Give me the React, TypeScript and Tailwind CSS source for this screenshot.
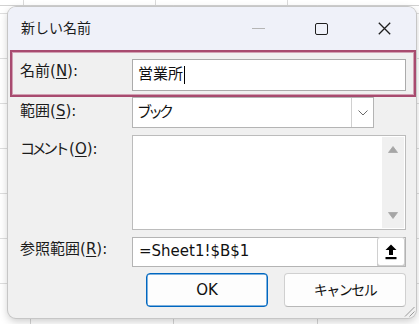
import React from 'react'

function Label({ text, hotkey, pt, wide }: { text: string; hotkey: string; pt: string; wide?: string }) {
  return (
    <div className={`w-[112px] shrink-0 h-[20px] leading-[20px] text-[15px] text-[#1b1b1b] whitespace-nowrap ${pt}`}>
      <span className={wide}>{text}</span>(<span className="underline underline-offset-2">{hotkey}</span>):
    </div>
  )
}

function Triangle({ down }: { down?: boolean }) {
  return (
    <svg width="10" height="7" viewBox="0 0 10 7">
      <path d={down ? 'M0.5 0.5 L9.5 0.5 L5 6.5 Z' : 'M5 0.5 L9.5 6.5 L0.5 6.5 Z'} fill="#a6a6a6" strokeLinejoin="round" stroke="#a6a6a6" strokeWidth="0.8" />
    </svg>
  )
}

export default function App() {
  const hLines = [13, 58, 103, 148, 193, 238, 283]
  return (
    <div className="relative w-[419px] h-[324px] overflow-hidden bg-white font-['DejaVu_Sans','Noto_Sans_CJK_JP',sans-serif]">
      {/* spreadsheet behind the dialog */}
      <div className="absolute left-0 top-[5px] w-full h-[1px] bg-[#d2d2d2]" />
      {[23, 155, 287].map(x => (
        <div key={x} className="absolute top-0 h-[5px] w-[1px] bg-[#dadada]" style={{ left: x }} />
      ))}
      {[30, 173, 317].map(x => (
        <div key={x} className="absolute top-[5px] h-[319px] w-[1px] bg-[#d4d4d4]" style={{ left: x }} />
      ))}
      {hLines.map(y => (
        <div key={y} className="absolute left-0 w-full h-[1px] bg-[#dedede]" style={{ top: y }} />
      ))}

      {/* dialog */}
      <div className="absolute left-[8px] top-[7px] w-[408px] h-[311px] rounded-[8px] bg-[#f0f0f0] shadow-[0_0_0_1px_#c6c6c6,0_3px_8px_rgba(0,0,0,0.22)] flex flex-col">
        {/* title bar */}
        <div className="h-[43px] shrink-0 flex items-center rounded-t-[8px] bg-[#eff1f9]">
          <div className="pl-[13px] text-[14px] text-[#1b1b1b]">新しい名前</div>
          <div className="ml-auto flex h-full">
            <div className="w-[63px] flex items-center justify-center">
              <div className="w-[13px] h-[1px] bg-[#b5b5b5]" />
            </div>
            <div className="w-[63px] flex items-center justify-center">
              <div className="w-[13px] h-[12px] border-[1.5px] border-[#1f1f1f] rounded-[2px]" />
            </div>
            <div className="w-[63px] flex items-center justify-center">
              <svg width="13" height="13" viewBox="0 0 13 13">
                <path d="M0.8 0.8 L12.2 12.2 M12.2 0.8 L0.8 12.2" stroke="#1f1f1f" strokeWidth="1.3" />
              </svg>
            </div>
          </div>
        </div>

        {/* name row (highlighted) */}
        <div className="ml-[2px] w-[406px] h-[47px] shrink-0 border-2 border-[#a84b6f] shadow-[inset_0_0_0_1px_#d2a0b3] flex pl-[8px] pt-[7px]">
          <Label text="名前" hotkey="N" pt="mt-[2px]" />
          <div className="w-[274px] h-[32px] border border-[#ababab] bg-white flex items-center pl-[5px] pb-[1px] text-[15px] text-[#111]">
            <span>営業所</span>
            <span className="inline-block w-[1px] h-[18px] bg-black ml-[1px]" />
          </div>
        </div>

        {/* scope row */}
        <div className="flex pl-[12px] h-[31px] shrink-0">
          <Label text="範囲" hotkey="S" pt="mt-[4px]" />
          <div className="w-[242px] h-[31px] border border-[#b4b4b4] bg-white flex">
            <div className="flex-1 flex items-center pl-[4px] text-[15px] text-[#111]">
              <span className="tracking-[-4px]">ブック</span>
            </div>
            <div className="w-[22px] h-full border-l border-[#d0d0d0] flex items-center justify-center">
              <svg width="10" height="6" viewBox="0 0 10 6">
                <path d="M0.5 0.5 L5 5 L9.5 0.5" fill="none" stroke="#6a6a6a" strokeWidth="1" />
              </svg>
            </div>
          </div>
        </div>

        {/* comment row */}
        <div className="flex pl-[12px] mt-[7px] h-[95px] shrink-0">
          <Label text="コメント" hotkey="O" pt="mt-[4px]" wide="tracking-[-3.5px] mr-[3px]" />
          <div className="w-[274px] h-[95px] border border-[#bcbcbc] bg-white flex justify-end pr-[1px] py-[1px]">
            <div className="w-[22px] h-full bg-[#f0f0f0] flex flex-col items-center justify-between pt-[9px] pb-[9px]">
              <Triangle />
              <Triangle down />
            </div>
          </div>
        </div>

        {/* reference row */}
        <div className="flex pl-[12px] mt-[7px] h-[30px] shrink-0">
          <Label text="参照範囲" hotkey="R" pt="mt-[2px]" />
          <div className="w-[274px] h-[30px] border border-[#b4b4b4] bg-white flex">
            <div className="flex-1 flex items-center pl-[6px] pb-[1px] text-[15px] text-[#111]">=Sheet1!$B$1</div>
            <div className="w-[28px] h-[29px] -mt-[1px] rounded-[3px] border border-[#d0d0d0] bg-white shadow-[0_1px_0_#b8b8b8] flex items-center justify-center">
              <svg width="12" height="16" viewBox="0 0 12 16">
                <path d="M6 0.5 L11.5 6 L8 6 L8 11 L4 11 L4 6 L0.5 6 Z" fill="#000" />
                <rect x="0.5" y="13" width="11" height="2.2" fill="#000" />
              </svg>
            </div>
          </div>
        </div>

        {/* buttons */}
        <div className="flex justify-end gap-[16px] pr-[10px] mt-[6px]">
          <div className="w-[122px] h-[34px] rounded-[4px] border border-[#0067c0] shadow-[inset_0_0_0_0.5px_#0067c0] bg-[#fdfdfd] flex items-center justify-center text-[15px] text-[#111]">
            OK
          </div>
          <div className="w-[122px] h-[34px] rounded-[4px] border border-[#d0d0d0] border-b-[#b8b8b8] bg-[#fdfdfd] flex items-center justify-center text-[14px] text-[#111]">
            <span className="tracking-[-1.5px]">キャンセル</span>
          </div>
        </div>

        {/* resize grip */}
        <svg className="absolute right-[1px] bottom-[1px]" width="12" height="12" viewBox="0 0 12 12">
          <path d="M11.5 2 L2 11.5 M11.5 6.5 L6.5 11.5" stroke="#9a9a9a" strokeWidth="1" />
        </svg>
      </div>
    </div>
  )
}
